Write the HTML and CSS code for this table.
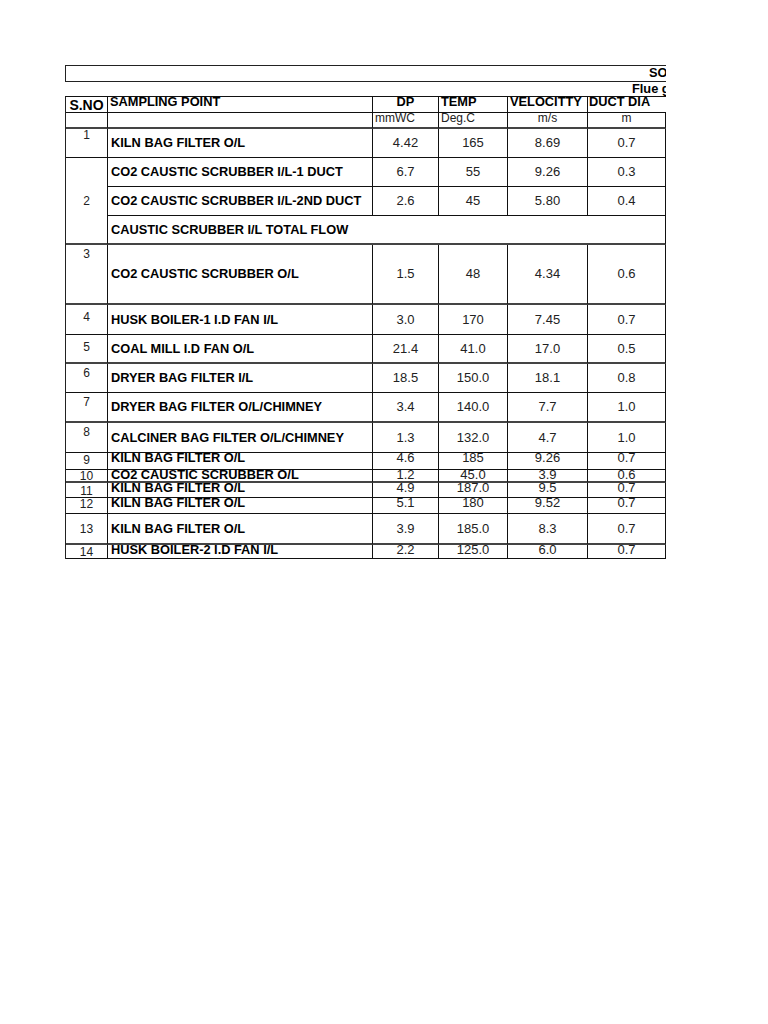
FILE: index.html
```html
<!DOCTYPE html>
<html>
<head>
<meta charset="utf-8">
<title>Flue gas sampling</title>
<link rel="stylesheet" href="styles.css">
</head>
<body>
<div class="sheet">
  <div class="title-box"><span class="title">SO</span></div>
  <div class="sub-row"><span class="sub">Flue gas</span></div>
  <div class="grid">
    <!-- header -->
    <div class="c h mid">S.NO</div>
    <div class="c h left top pl2">SAMPLING POINT</div>
    <div class="c h top">DP</div>
    <div class="c h left top pl2">TEMP</div>
    <div class="c h left top pl2">VELOCITTY</div>
    <div class="c h left top pl1 noright">DUCT DIA</div>
    <!-- units -->
    <div class="c tk"></div>
    <div class="c tk"></div>
    <div class="c u left top pl2 tk">mmWC</div>
    <div class="c u left top pl2 tk">Deg.C</div>
    <div class="c u top tk">m/s</div>
    <div class="c u top tk">m</div>
    <!-- 1 -->
    <div class="c no p1">1</div>
    <div class="c nm">KILN BAG FILTER O/L</div>
    <div class="c v">4.42</div>
    <div class="c v">165</div>
    <div class="c v">8.69</div>
    <div class="c v">0.7</div>
    <!-- 2 -->
    <div class="c no mid span3 tk">2</div>
    <div class="c nm">CO2 CAUSTIC SCRUBBER I/L-1 DUCT</div>
    <div class="c v">6.7</div>
    <div class="c v">55</div>
    <div class="c v">9.26</div>
    <div class="c v">0.3</div>
    <div class="c nm">CO2 CAUSTIC SCRUBBER I/L-2ND DUCT</div>
    <div class="c v">2.6</div>
    <div class="c v">45</div>
    <div class="c v">5.80</div>
    <div class="c v">0.4</div>
    <div class="c nm span5 tk">CAUSTIC SCRUBBER I/L TOTAL FLOW</div>
    <!-- 3 -->
    <div class="c no p4 tk">3</div>
    <div class="c nm tk">CO2 CAUSTIC SCRUBBER O/L</div>
    <div class="c v tk">1.5</div>
    <div class="c v tk">48</div>
    <div class="c v tk">4.34</div>
    <div class="c v tk">0.6</div>
    <!-- 4 -->
    <div class="c no p7">4</div>
    <div class="c nm">HUSK BOILER-1 I.D FAN I/L</div>
    <div class="c v">3.0</div>
    <div class="c v">170</div>
    <div class="c v">7.45</div>
    <div class="c v">0.7</div>
    <!-- 5 -->
    <div class="c no p7 tk">5</div>
    <div class="c nm tk">COAL MILL I.D FAN O/L</div>
    <div class="c v tk">21.4</div>
    <div class="c v tk">41.0</div>
    <div class="c v tk">17.0</div>
    <div class="c v tk">0.5</div>
    <!-- 6 -->
    <div class="c no p4">6</div>
    <div class="c nm">DRYER BAG FILTER I/L</div>
    <div class="c v">18.5</div>
    <div class="c v">150.0</div>
    <div class="c v">18.1</div>
    <div class="c v">0.8</div>
    <!-- 7 -->
    <div class="c no p4 tk">7</div>
    <div class="c nm tk">DRYER BAG FILTER O/L/CHIMNEY</div>
    <div class="c v tk">3.4</div>
    <div class="c v tk">140.0</div>
    <div class="c v tk">7.7</div>
    <div class="c v tk">1.0</div>
    <!-- 8 -->
    <div class="c no p4">8</div>
    <div class="c nm">CALCINER BAG FILTER O/L/CHIMNEY</div>
    <div class="c v">1.3</div>
    <div class="c v">132.0</div>
    <div class="c v">4.7</div>
    <div class="c v">1.0</div>
    <!-- 9 -->
    <div class="c no p2">9</div>
    <div class="c nm top">KILN BAG FILTER O/L</div>
    <div class="c v top">4.6</div>
    <div class="c v top">185</div>
    <div class="c v top">9.26</div>
    <div class="c v top">0.7</div>
    <!-- 10 -->
    <div class="c no p1 tk">10</div>
    <div class="c nm top tk">CO2 CAUSTIC SCRUBBER O/L</div>
    <div class="c v top tk">1.2</div>
    <div class="c v top tk">45.0</div>
    <div class="c v top tk">3.9</div>
    <div class="c v top tk">0.6</div>
    <!-- 11 -->
    <div class="c no p3">11</div>
    <div class="c nm top">KILN BAG FILTER O/L</div>
    <div class="c v top">4.9</div>
    <div class="c v top">187.0</div>
    <div class="c v top">9.5</div>
    <div class="c v top">0.7</div>
    <!-- 12 -->
    <div class="c no p1">12</div>
    <div class="c nm top">KILN BAG FILTER O/L</div>
    <div class="c v top">5.1</div>
    <div class="c v top">180</div>
    <div class="c v top">9.52</div>
    <div class="c v top">0.7</div>
    <!-- 13 -->
    <div class="c no mid tk">13</div>
    <div class="c nm tk">KILN BAG FILTER O/L</div>
    <div class="c v tk">3.9</div>
    <div class="c v tk">185.0</div>
    <div class="c v tk">8.3</div>
    <div class="c v tk">0.7</div>
    <!-- 14 -->
    <div class="c no p2">14</div>
    <div class="c nm top">HUSK BOILER-2 I.D FAN I/L</div>
    <div class="c v top">2.2</div>
    <div class="c v top">125.0</div>
    <div class="c v top">6.0</div>
    <div class="c v top">0.7</div>
  </div>
</div>
</body>
</html>
```

FILE: styles.css
```css
html, body {
  margin: 0;
  padding: 0;
  background: #fff;
}

body {
  font-family: "Liberation Sans", Arial, sans-serif;
  color: #000;
}

.sheet {
  margin: 65px 0 0 65px;
  width: 601px;
  overflow: hidden;
}

.title-box {
  width: 800px;
  box-sizing: content-box;
  height: 14px;
  padding-top: 1px;
  border-top: 1px solid #222;
  border-bottom: 1px solid #222;
  border-left: 1px solid #222;
  line-height: 10px;
  white-space: nowrap;
}

.title,
.sub {
  font-weight: bold;
  font-size: 12.8px;
}

.title {
  padding-left: 583px;
}

.sub-row {
  height: 13px;
  padding-top: 1px;
  line-height: 10px;
  white-space: nowrap;
}

.sub {
  padding-left: 567px;
}

.grid {
  display: grid;
  grid-template-columns: 42px 265px 66px 69px 80px 78px;
  grid-template-rows: 16px 16px 29px 29px 29px 29px 60px 30px 29px 29px 30px 30px 17px 13px 15px 16px 31px 14px;
  border-top: 1px solid #111;
  border-left: 1px solid #222;
}

.c {
  box-sizing: border-box;
  border-right: 1px solid #111;
  border-bottom: 1px solid #111;
  display: flex;
  align-items: center;
  justify-content: center;
  white-space: nowrap;
  line-height: 10px;
  min-width: 0;
  overflow: visible;
}

.c.tk {
  border-bottom: 2px solid #444;
}

.noright {
  border-right: none;
}

.h {
  font-weight: bold;
  font-size: 12.8px;
}

.h.mid {
  font-size: 14px;
}

.u {
  font-size: 12px;
  color: #222;
}

.no {
  font-size: 12px;
  color: #222;
  align-items: flex-start;
}

.no.mid {
  align-items: center;
}

.nm {
  font-weight: bold;
  font-size: 12.8px;
  justify-content: flex-start;
  padding-left: 3px;
}

.v {
  font-size: 13px;
  color: #222;
}

.left {
  justify-content: flex-start;
}

.top {
  align-items: flex-start;
}

.mid {
  align-items: center;
}

.pl1 { padding-left: 1px; }
.pl2 { padding-left: 2px; }

.p1 { padding-top: 1px; }
.p2 { padding-top: 2px; }
.p3 { padding-top: 3px; }
.p4 { padding-top: 4px; }
.p7 { padding-top: 7px; }

.span3 {
  grid-row: span 3;
}

.span5 {
  grid-column: span 5;
}
```
